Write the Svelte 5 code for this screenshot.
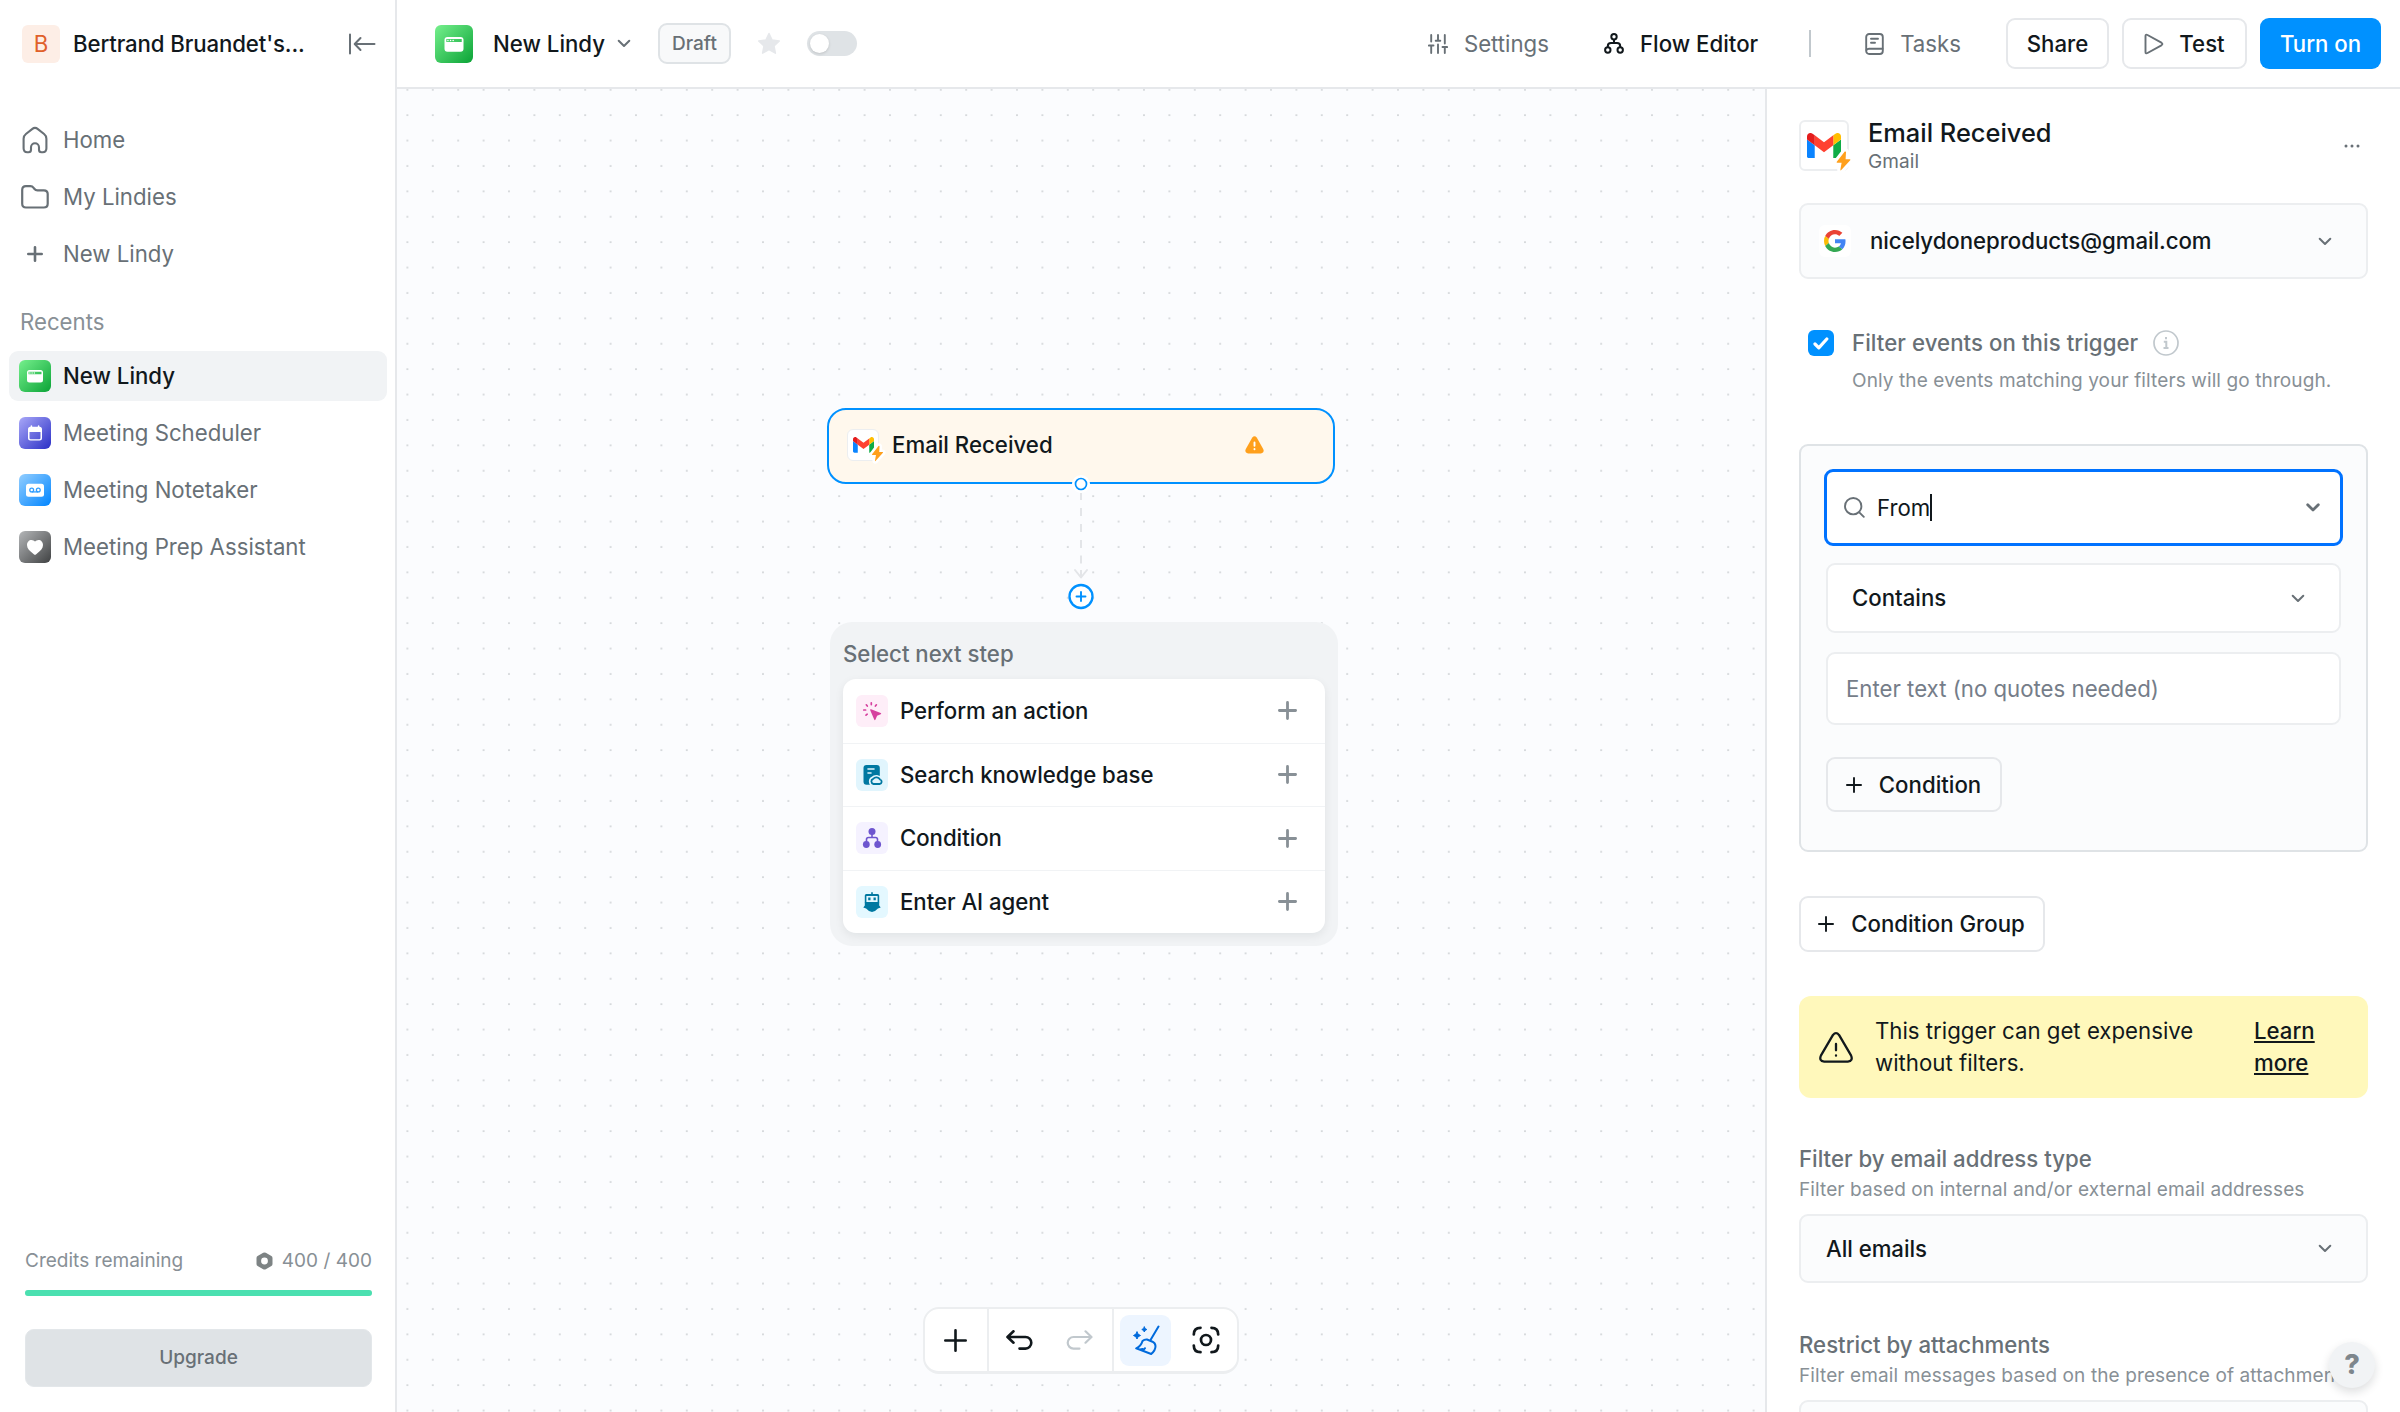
<script lang="ts">
  type Recent = { name: string; kind: string; active?: boolean };

  const recents: Recent[] = [
    { name: "New Lindy", kind: "window", active: true },
    { name: "Meeting Scheduler", kind: "calendar" },
    { name: "Meeting Notetaker", kind: "tape" },
    { name: "Meeting Prep Assistant", kind: "heart" },
  ];

  const steps = [
    { label: "Perform an action", kind: "action" },
    { label: "Search knowledge base", kind: "knowledge" },
    { label: "Condition", kind: "branch" },
    { label: "Enter AI agent", kind: "agent" },
  ];

  const creditsUsed = 400;
  const creditsTotal = 400;
</script>

{#snippet chevron(strong = false)}
  <svg class="chevron" width="14" height="9" viewBox="0 0 14 9" fill="none" stroke="currentColor" stroke-width={strong ? 2.8 : 2} stroke-linecap="round" stroke-linejoin="round">
    <path d="M1.7 1.7 7 7l5.3-5.3" />
  </svg>
{/snippet}

{#snippet plus(size: number, width: number)}
  <svg width={size} height={size} viewBox="0 0 {size} {size}" fill="none" stroke="currentColor" stroke-width={width} stroke-linecap="round">
    <path d="M{size / 2} {width / 2}V{size - width / 2}M{width / 2} {size / 2}H{size - width / 2}" />
  </svg>
{/snippet}

{#snippet gmail()}
  <svg class="gmail-mark" viewBox="52 42 88 66">
    <path fill="#0a84ff" d="M58 108h14V74L52 59v43c0 3.32 2.69 6 6 6" />
    <path fill="#0fac46" d="M120 108h14c3.32 0 6-2.69 6-6V59l-20 15" />
    <path fill="#ffbe00" d="M120 48v26l20-15v-8c0-7.42-8.47-11.65-14.4-7.2" />
    <path fill="#ff4131" d="M72 74V48l24 18 24-18v26L96 92" />
    <path fill="#e41c1c" d="M52 51v8l20 15V48l-5.6-4.2c-5.94-4.45-14.4-.22-14.4 7.2" />
  </svg>
  <svg class="bolt" viewBox="-3 -3 20 25">
    <path fill="#ffa01c" stroke="#fff" stroke-width="6" stroke-linejoin="round" paint-order="stroke" d="M8.2.4.6 10.2q-.6.9.5.9h4.1L4 17.8q0 1 .9.2L13.4 8.6q.6-.9-.5-.9H9L9.4.9q-.2-1-1.2-.5Z" />
  </svg>
{/snippet}

{#snippet appIcon(kind: string)}
  <svg viewBox="0 0 32 32" fill="#fff">
    {#if kind === "window"}
      <path fill-rule="evenodd" d="M10.5 10h11a2.5 2.5 0 0 1 2.5 2.5V20a2.5 2.5 0 0 1-2.5 2.5h-11A2.5 2.5 0 0 1 8 20v-7.5A2.5 2.5 0 0 1 10.5 10ZM9.5 11.8v2.5h13v-2.5Z" />
      <circle cx="10.9" cy="13" r=".65" /><circle cx="13.1" cy="13" r=".65" /><circle cx="15.3" cy="13" r=".65" />
    {:else if kind === "calendar"}
      <path fill-rule="evenodd" d="M11.5 9.8h9a2.5 2.5 0 0 1 2.5 2.5V21a2.5 2.5 0 0 1-2.5 2.5h-9A2.5 2.5 0 0 1 9 21v-8.700a2.5 2.5 0 0 1 2.5-2.5ZM10.5 15v6q0 1.2 1.2 1.2h8.6q1.2 0 1.2-1.2v-6Z" />
      <rect x="11.6" y="8.2" width="1.6" height="3" rx=".8" /><rect x="18.8" y="8.2" width="1.6" height="3" rx=".8" />
    {:else if kind === "tape"}
      <rect x="7" y="9.8" width="18" height="13" rx="2.5" />
      <g fill="none" stroke="#2f9dff" stroke-width="1.3"><circle cx="12.7" cy="16" r="1.9" /><circle cx="19.3" cy="16" r="1.9" /><path d="M12.7 17.9h6.6" /></g>
    {:else}
      <path d="M16 23.7q-.6 0-1.2-.5C10.5 20 8 17.5 8 14.1 8 11.2 10 9.1 12.5 9.1q2.2 0 3.5 1.5 1.300-1.500 3.500-1.500C22 9.1 24 11.2 24 14.1c0 3.4-2.5 5.9-6.8 9.100q-.6.5-1.2.5Z" />
    {/if}
  </svg>
{/snippet}

<div class="app">
  <aside class="sidebar">
    <div class="workspace">
      <span class="avatar">B</span>
      <span class="workspace-name">Bertrand Bruandet's...</span>
      <svg class="collapse" width="28" height="22" viewBox="0 0 28 22" fill="none" stroke="#687076" stroke-width="2" stroke-linecap="round" stroke-linejoin="round">
        <path d="M2 1.500v19M26.500 11H7.200M12.500 5 6.700 11l5.800 6" />
      </svg>
    </div>

    <nav>
      <div class="item">
        <span class="item-icon">
          <svg width="26" height="28" viewBox="0 0 26 28" fill="none" stroke="currentColor" stroke-width="2.1" stroke-linejoin="round">
            <path d="M1.600 12.800q0-3 2.300-4.800l6.200-4.900q2.900-2.300 5.800 0L22.100 8q2.300 1.800 2.300 4.800v9.400q0 4-3.700 4h-1.200q-2.500 0-2.500-2.500v-2.500a4 4 0 0 0-8 0v2.500q0 2.500-2.500 2.500H5.300q-3.700 0-3.700-4Z" />
          </svg>
        </span>
        Home
      </div>
      <div class="item">
        <span class="item-icon">
          <svg width="28" height="24" viewBox="0 0 28 24" fill="none" stroke="currentColor" stroke-width="2.2" stroke-linejoin="round">
            <path d="M1.200 18.700V4.900q0-3.700 3.700-3.700h4.500q2 0 3.200 1.600l.7.900q1.200 1.600 3.200 1.600h6.300q3.900 0 3.900 3.700v9.700q0 3.800-3.900 3.800H4.900q-3.700 0-3.700-3.800Z" />
          </svg>
        </span>
        My Lindies
      </div>
      <div class="item">
        <span class="item-icon">{@render plus(16, 2.6)}</span>
        New Lindy
      </div>
    </nav>

    <div class="section-title">Recents</div>

    <nav>
      {#each recents as r}
        <div class="item" class:active={r.active}>
          <span class="app-icon {r.kind}">{@render appIcon(r.kind)}</span>
          {r.name}
        </div>
      {/each}
    </nav>

    <div class="credits">
      <div class="credits-row">
        <span>Credits remaining</span>
        <span class="amount">
          <svg width="17" height="18" viewBox="0 0 17 18"><path fill="#7d8384" fill-rule="evenodd" d="M7.200.8q1.300-.7 2.600 0l5.600 3.200q1.100.6 1.100 1.900v6.200q0 1.300-1.100 1.900l-5.600 3.200q-1.300.7-2.600 0L1.600 14Q.5 13.400.5 12.100V5.900Q.5 4.600 1.600 4ZM8.500 5.600a3.400 3.400 0 1 0 0 6.800 3.400 3.400 0 0 0 0-6.800Z" /></svg>
          {creditsUsed} / {creditsTotal}
        </span>
      </div>
      <div class="meter"><div class="meter-fill" style="width: {(creditsUsed / creditsTotal) * 100}%"></div></div>
      <button class="upgrade">Upgrade</button>
    </div>
  </aside>

  <main>
    <header class="topbar">
      <span class="app-icon window big">{@render appIcon("window")}</span>
      <span class="title">New Lindy</span>
      {@render chevron()}
      <span class="badge">Draft</span>
      <svg class="star" width="24" height="23" viewBox="0 0 24 23"><path fill="#e6e8eb" stroke="#e6e8eb" stroke-width="1.5" stroke-linejoin="round" d="m12 1.500 3.100 6.600 7.200.9-5.300 5 1.400 7.200L12 17.700l-6.400 3.500L7 14 1.700 9l7.200-.9Z" /></svg>
      <span class="toggle"><span class="knob"></span></span>

      <div class="tabs">
        <span class="tab">
          <svg width="20" height="20" viewBox="0 0 20 20" fill="none" stroke="currentColor" stroke-width="1.9" stroke-linecap="round">
            <path d="M3.200 1v6.500M3.200 11.500V19M.9 11.500h4.600M10 1v5.500M10 10.500V19M7.700 6.800h4.600M16.800 1v8.500M16.800 13.200V19M14.500 13h4.600" />
          </svg>
          Settings
        </span>
        <span class="tab current">
          <svg width="20" height="21" viewBox="0 0 20 21" fill="none" stroke="currentColor" stroke-width="2">
            <circle cx="10" cy="3.8" r="2.7" /><circle cx="3.8" cy="17" r="2.7" /><circle cx="16.2" cy="17" r="2.7" />
            <path d="M10 6.500v3.500M3.800 14.300v-1.100q0-3.200 3.200-3.200h6q3.200 0 3.200 3.200v1.100" />
          </svg>
          Flow Editor
        </span>
        <span class="divider"></span>
        <span class="tab">
          <svg width="19" height="22" viewBox="0 0 19 22" fill="none" stroke="currentColor" stroke-width="1.9" stroke-linecap="round">
            <rect x="1.2" y="1" width="16.6" height="20" rx="3" /><path d="M1.500 17q.8-1.200 2.500-1.200h13.500M6 5.800h7M6 9.800h4" />
          </svg>
          Tasks
        </span>
      </div>
      <button class="btn share">Share</button>
      <button class="btn test">
        <svg width="20" height="22" viewBox="0 0 20 22" fill="none" stroke="#687076" stroke-width="1.9" stroke-linejoin="round"><path d="M1.500 3.100q0-2.200 2-1.100l13.900 7.700q2 1.300 0 2.600L3.500 20q-2 1.100-2-1.100Z" /></svg>
        Test
      </button>
      <button class="btn primary">Turn on</button>
    </header>

    <div class="body">
      <div class="canvas">
        <svg class="dots" width="100%" height="100%">
          <pattern id="grid" x="-2.3" y="-12" width="25.4" height="25.4" patternUnits="userSpaceOnUse">
            <circle cx="12.7" cy="12.7" r=".85" fill="#b9bdc1" />
          </pattern>
          <rect width="100%" height="100%" fill="url(#grid)" />
        </svg>

        <div class="node">
          <span class="service small">{@render gmail()}</span>
          <span class="node-title">Email Received</span>
          <svg width="19" height="18" viewBox="0 0 19 18"><path fill="#ffa01c" d="M7.300 1.600q2.200-2.800 4.400 0l6.500 11.500q1.600 3.900-2.200 4.300H3Q-.8 17 .8 13.100Z" /><path stroke="#fff" stroke-width="1.9" stroke-linecap="round" d="M9.500 6.500v3.300M9.500 13v.2" /></svg>
        </div>

        <!-- connector from the trigger down to the add button -->
        <svg class="edge" width="28" height="136" viewBox="0 0 28 136" fill="none">
          <path stroke="#e3e5e8" stroke-width="2" d="M14 19v7M14 34v8M14 50v8M14 66v8M14 81.500v8M14 96v8" />
          <path stroke="#e3e5e8" stroke-width="2" stroke-linecap="round" stroke-linejoin="round" d="m8 96 6 7.500 6-7.500" />
          <circle cx="14" cy="10" r="9" fill="#fff" />
          <circle cx="14" cy="10" r="5.5" fill="#fff" stroke="#0091ff" stroke-width="1.7" />
          <circle cx="14" cy="122.5" r="11.5" fill="#fff" stroke="#0091ff" stroke-width="2.3" />
          <path stroke="#0091ff" stroke-width="1.9" stroke-linecap="round" d="M14 118v9M9.500 122.500h9" />
        </svg>

        <div class="picker">
          <div class="picker-title">Select next step</div>
          <div class="picker-list">
            {#each steps as s}
              <div class="step">
                <span class="step-icon {s.kind}">
                  <svg viewBox="0 0 32 32" fill="currentColor">
                    {#if s.kind === "action"}
                      <path d="M14.200 15.200q-.4-1.300.9-.9l9.600 3.800q1.200.6 0 1.200l-3.600 1.500-1.600 3.800q-.7 1.200-1.300 0Z" />
                      <path fill="none" stroke="currentColor" stroke-width="1.7" stroke-linecap="round" d="M15.300 7.800v1.800M10.300 9.800l1 1.200M20.400 9.800l-1 1.200M7.800 15h1.800M10 20.200l1.200-1" />
                    {:else if s.kind === "knowledge"}
                      <rect x="7.5" y="6" width="16.3" height="19.8" rx="3" />
                      <path fill="none" stroke="#e1f5fd" stroke-width="1.6" stroke-linecap="round" d="M12 10h6M12 14h3" />
                      <path fill="#e1f5fd" stroke="#e1f5fd" stroke-width="5" d="M17.500 25a2.700 2.700 0 0 1-.3-5.200 4.300 4.300 0 0 1 6.800.7 2.300 2.300 0 0 1-.4 4.500Z" />
                      <path fill="none" stroke="currentColor" stroke-width="1.8" d="M17.500 25a2.700 2.700 0 0 1-.3-5.200 4.300 4.300 0 0 1 6.800.7 2.300 2.300 0 0 1-.4 4.500Z" />
                    {:else if s.kind === "branch"}
                      <circle cx="16" cy="9.5" r="3.5" /><circle cx="10.3" cy="22.5" r="3.4" /><circle cx="21.7" cy="22.5" r="3.4" />
                      <path fill="none" stroke="currentColor" stroke-width="1.6" d="M16 12v3.500M10.500 20v-2.500q0-2 2-2h7q2 0 2 2V20" />
                    {:else}
                      <path fill-rule="evenodd" d="M15.200 6.300h1.600v1.800h4.900q1.500 0 1.500 1.500V17H8.800V9.600q0-1.500 1.500-1.500h4.900ZM10.400 9.900v6h11.200v-6Z" />
                      <path d="M12.200 11.600h2.300v2.600h-2.300ZM17.500 11.600h2.300v2.600h-2.300ZM8.800 16.500h14.400v3l1.500 2-2.800 1.100Q19 26 16 26t-5.900-3.400l-2.800-1.100 1.500-2Z" />
                    {/if}
                  </svg>
                </span>
                <span class="step-label">{s.label}</span>
                {@render plus(19, 2.8)}
              </div>
            {/each}
          </div>
        </div>

        <div class="toolbar">
          <span class="tool add">{@render plus(23, 2.6)}</span>
          <span class="tool-group">
            <svg width="27" height="20" viewBox="0 0 27 20" fill="none" stroke="currentColor" stroke-width="2.6" stroke-linecap="round" stroke-linejoin="round"><path d="M7.500 1.300 1.500 7l6 5.700M2 7h17.500a5.600 5.600 0 0 1 0 11.600H13.500" /></svg>
            <svg class="faded" width="27" height="20" viewBox="0 0 27 20" fill="none" stroke="currentColor" stroke-width="2.2" stroke-linecap="round" stroke-linejoin="round"><path d="M19.500 1.300l6 5.700-6 5.700M25 7H7.500a5.600 5.600 0 0 0 0 11.600h6" /></svg>
          </span>
          <span class="tool-group last">
            <span class="tidy">
              <svg width="28" height="30" viewBox="0 0 28 30" fill="none" stroke="currentColor" stroke-width="2" stroke-linecap="round" stroke-linejoin="round">
                <path d="M26.500 1.500 18.800 14.500M10.500 16q2-1.800 4.500-1.500l5.500 2.200q2.800 1.400 3 4.300.1 4.200-4.300 8L4.200 23.300q4.800-2 6.300-7.300ZM11 25.500l2-2.300M8 24.500l2.500-.500" />
                <path fill="currentColor" stroke-width="1" d="M5 7q.5 2.800 3.500 3.500Q5.500 11.200 5 14q-.6-2.800-3.500-3.500Q4.400 9.800 5 7ZM12.300 2q.3 2 2.500 2.500-2.200.5-2.500 2.500-.3-2-2.500-2.500Q12 4 12.300 2Z" />
              </svg>
            </span>
            <svg width="28" height="28" viewBox="0 0 28 28" fill="none" stroke="currentColor" stroke-width="2.7" stroke-linecap="round">
              <circle cx="14" cy="14" r="5" /><path d="M1.800 8.500q0-6.700 6.700-6.700M19.500 1.800q6.700 0 6.700 6.700M26.200 19.500q0 6.700-6.700 6.700M8.500 26.200q-6.700 0-6.700-6.700" />
            </svg>
          </span>
        </div>
      </div>

      <section class="panel">
        <div class="panel-head">
          <span class="service large">{@render gmail()}</span>
          <div class="panel-names">
            <div class="panel-title">Email Received</div>
            <div class="hint">Gmail</div>
          </div>
          <svg class="more" width="16" height="4" viewBox="0 0 16 4" fill="#687076"><circle cx="2" cy="2" r="1.5" /><circle cx="8" cy="2" r="1.5" /><circle cx="14" cy="2" r="1.5" /></svg>
        </div>

        <div class="select account">
          <span class="google">
            <svg width="22" height="22" viewBox="0 0 48 48">
              <path fill="#EA4335" d="M24 9.500c3.540 0 6.710 1.220 9.210 3.600l6.850-6.850C35.900 2.380 30.470 0 24 0 14.620 0 6.510 5.380 2.560 13.220l7.980 6.190C12.430 13.720 17.740 9.500 24 9.500z" />
              <path fill="#4285F4" d="M46.980 24.550c0-1.570-.15-3.090-.38-4.550H24v9.020h12.940c-.58 2.960-2.260 5.480-4.780 7.180l7.730 6c4.510-4.180 7.090-10.360 7.090-17.650z" />
              <path fill="#FBBC05" d="M10.530 28.590c-.48-1.450-.76-2.990-.76-4.590s.27-3.140.76-4.590l-7.980-6.190C.92 16.460 0 20.120 0 24c0 3.880.92 7.540 2.560 10.780l7.970-6.190z" />
              <path fill="#34A853" d="M24 48c6.480 0 11.930-2.130 15.890-5.810l-7.730-6c-2.150 1.450-4.920 2.300-8.160 2.300-6.260 0-11.570-4.220-13.470-9.910l-7.980 6.190C6.510 42.620 14.620 48 24 48z" />
            </svg>
          </span>
          <span class="select-value">nicelydoneproducts@gmail.com</span>
          {@render chevron()}
        </div>

        <div class="check-row">
          <span class="checkbox">
            <svg width="16" height="13" viewBox="0 0 16 13" fill="none" stroke="#fff" stroke-width="3.2" stroke-linecap="round" stroke-linejoin="round"><path d="m2 7 3.800 3.800L13.800 2" /></svg>
          </span>
          <span class="check-label">Filter events on this trigger</span>
          <svg width="26" height="26" viewBox="0 0 26 26" fill="none" stroke="#c1c8cd" stroke-width="1.7"><circle cx="13" cy="13" r="12" /><path stroke-width="2" d="M13 7v2.300M10.800 11.700h2.500v6M10.500 18h5" /></svg>
        </div>
        <div class="hint indent">Only the events matching your filters will go through.</div>

        <div class="group">
          <div class="field focused">
            <svg width="21" height="21" viewBox="0 0 21 21" fill="none" stroke="#687076" stroke-width="1.9" stroke-linecap="round"><circle cx="9.2" cy="9.2" r="8.2" /><path d="m15.300 15.300 4.500 4.500" /></svg>
            <span class="query">From</span><span class="caret"></span>
            {@render chevron(true)}
          </div>
          <div class="field operator"><span>Contains</span>{@render chevron()}</div>
          <div class="field value">Enter text (no quotes needed)</div>
          <button class="btn add-condition">{@render plus(16, 1.9)}Condition</button>
        </div>

        <button class="btn add-group">{@render plus(16, 1.9)}Condition Group</button>

        <div class="notice">
          <svg width="34" height="31" viewBox="0 0 34 31" fill="none" stroke="#11181c" stroke-width="2.3" stroke-linecap="round" stroke-linejoin="round"><path d="M14 2.900q3-3.400 6 0l12 20.500q2.400 5.600-3.200 6.200H5.200Q-.4 29 2 23.400ZM17 12v6.300M17 23.500v.2" /></svg>
          <p>This trigger can get expensive without filters.</p>
          <span class="learn">Learn more</span>
        </div>

        <div class="label">Filter by email address type</div>
        <div class="hint">Filter based on internal and/or external email addresses</div>
        <div class="select plain"><span class="select-value">All emails</span>{@render chevron()}</div>

        <div class="label second">Restrict by attachments</div>
        <div class="hint">Filter email messages based on the presence of attachments</div>
        <div class="select plain"></div>
      </section>
    </div>
  </main>

  <button class="help">?</button>
</div>

<style>
  :global(body) {
    margin: 0;
  }

  .app,
  .app * {
    box-sizing: border-box;
  }

  .app {
    display: flex;
    position: relative;
    width: 2400px;
    height: 1412px;
    overflow: hidden;
    background: #fff;
    color: #11181c;
    font-family: Inter, "Liberation Sans", sans-serif;
    font-size: 22.22px;
    line-height: 32px;
    white-space: nowrap;
  }

  svg {
    display: block;
    flex: none;
  }

  button {
    font: inherit;
    color: inherit;
    padding: 0;
  }

  .chevron {
    color: #687076;
  }

  /* sidebar */
  .sidebar {
    display: flex;
    flex-direction: column;
    flex: none;
    width: 397px;
    padding: 25px 8px 25px 9px;
    border-right: 2px solid #e6e8eb;
  }

  .workspace {
    display: flex;
    align-items: center;
    height: 38px;
    padding: 0 11px 0 13px;
    margin-bottom: 52px;
    font-weight: 500;
  }

  .avatar {
    width: 38px;
    height: 38px;
    border-radius: 6px;
    background: #fdeee6;
    color: #e0602a;
    font-weight: 400;
    line-height: 38px;
    text-align: center;
  }

  .workspace-name {
    margin-left: 13px;
    letter-spacing: -0.12px;
  }

  .collapse {
    margin-left: auto;
  }

  nav {
    display: flex;
    flex-direction: column;
    gap: 7.1px;
  }

  .item {
    display: flex;
    align-items: center;
    gap: 12px;
    height: 50px;
    padding-left: 10px;
    border-radius: 9px;
    color: #687076;
  }

  .item.active {
    background: #f1f3f5;
    color: #11181c;
    font-weight: 500;
  }

  .item-icon {
    display: flex;
    justify-content: center;
    width: 32px;
  }

  .section-title {
    margin: 27px 0 13px 11px;
    color: #889096;
  }

  .app-icon {
    width: 32px;
    height: 32px;
    border-radius: 6px;
  }

  .app-icon.big {
    width: 38px;
    height: 38px;
  }

  .window {
    background: linear-gradient(135deg, #76f08d, #0aa336);
  }

  .calendar {
    background: linear-gradient(135deg, #a9a8f8, #2a2fc6);
  }

  .tape {
    background: linear-gradient(135deg, #93ceff, #0085ff);
  }

  .heart {
    background: linear-gradient(135deg, #b4b6b8, #3f4142);
  }

  .credits {
    margin-top: auto;
    padding: 0 15px 0 16px;
    color: #889096;
    font-size: 19.05px;
  }

  .credits-row,
  .amount {
    display: flex;
    align-items: center;
    justify-content: space-between;
    gap: 9px;
  }

  .meter {
    height: 6px;
    margin: 13px 0 33px;
    border-radius: 3px;
    background: #e6e8eb;
  }

  .meter-fill {
    height: 100%;
    border-radius: 3px;
    background: #4be0b0;
  }

  .upgrade {
    display: block;
    width: 100%;
    height: 58px;
    border: 1px solid #e3e7ea;
    border-radius: 9px;
    background: #dfe3e6;
    color: #687076;
    font-weight: 500;
  }

  /* top bar */
  main {
    display: flex;
    flex-direction: column;
    flex: 1;
    min-width: 0;
  }

  .topbar {
    display: flex;
    align-items: center;
    flex: none;
    height: 89px;
    padding: 0 19px 0 38px;
    border-bottom: 2px solid #e6e8eb;
    font-weight: 500;
  }

  .title {
    margin: 0 12px 0 20px;
  }

  .badge {
    height: 41px;
    margin: 0 26px 0 27px;
    padding: 0 12px;
    border: 2px solid #dfe3e6;
    border-radius: 9px;
    background: #f8f9fa;
    color: #687076;
    font-size: 19.05px;
    line-height: 38px;
  }

  .toggle {
    width: 50px;
    height: 25px;
    margin-left: 26px;
    padding: 3px;
    border-radius: 13px;
    background: #dfe3e6;
  }

  .knob {
    display: block;
    width: 19px;
    height: 19px;
    border-radius: 50%;
    background: #fff;
    box-shadow: 0 1px 3px rgba(0, 0, 0, 0.15);
  }

  .tabs {
    display: flex;
    align-items: center;
    margin-left: auto;
    margin-right: 45px;
  }

  .tab {
    display: flex;
    align-items: center;
    gap: 16px;
    color: #687076;
    font-weight: 400;
  }

  .tab.current {
    margin-left: 55px;
    color: #11181c;
    font-weight: 500;
  }

  .divider {
    width: 2px;
    height: 27px;
    margin: 0 54px 0 51px;
    background: #c1c8cd;
  }

  .btn {
    display: flex;
    align-items: center;
    justify-content: center;
    height: 51px;
    border: 2px solid #e6e8eb;
    border-radius: 9px;
    background: #fff;
    font-weight: 500;
  }

  .share {
    width: 103px;
  }

  .test {
    gap: 15px;
    width: 125px;
    margin: 0 13px;
  }

  .btn.primary {
    width: 121px;
    border: 0;
    background: #0091ff;
    color: #fff;
  }

  .body {
    display: flex;
    flex: 1;
    min-height: 0;
  }

  /* flow canvas */
  .canvas {
    position: relative;
    flex: 1;
    background: #fbfcfe;
  }

  .dots {
    position: absolute;
    inset: 0;
  }

  .node {
    position: absolute;
    left: 430px;
    top: 319px;
    display: flex;
    align-items: center;
    width: 508px;
    height: 76px;
    padding: 0 69px 2px 18px;
    border: 2px solid #0091ff;
    border-radius: 19px;
    background: #fff8ed;
    font-weight: 500;
  }

  .node-title {
    flex: 1;
    margin-left: 13px;
  }

  .service {
    position: relative;
    display: flex;
    align-items: center;
    justify-content: center;
    flex: none;
    border: 2px solid #eceef0;
    background: #fff;
  }

  .service.small {
    width: 32px;
    height: 32px;
    border-width: 1px;
    border-radius: 6px;
  }

  .service.large {
    width: 50px;
    height: 51px;
    border-radius: 6px;
  }

  .small :global(.gmail-mark) {
    width: 21px;
  }

  .large :global(.gmail-mark) {
    width: 34px;
  }

  .bolt {
    position: absolute;
    right: -8px;
    bottom: -4px;
    width: 17px;
    overflow: visible;
  }

  .large .bolt {
    right: -7px;
    bottom: -5px;
    width: 21px;
  }

  .edge {
    position: absolute;
    left: 670px;
    top: 385px;
  }

  .picker {
    position: absolute;
    left: 433px;
    top: 533px;
    width: 508px;
    height: 324px;
    padding: 16px 13px 0;
    border-radius: 22px;
    background: #f1f3f5;
  }

  .picker-title {
    margin-bottom: 9px;
    color: #687076;
    font-weight: 500;
  }

  .picker-list {
    border-radius: 13px;
    background: #fff;
    box-shadow: 0 3px 10px rgba(17, 24, 28, 0.07);
  }

  .step {
    display: flex;
    align-items: center;
    height: 63.5px;
    padding: 0 28px 0 13px;
    color: #889096;
  }

  .step + .step {
    border-top: 1.6px solid #f1f3f5;
  }

  .step-icon {
    width: 32px;
    height: 32px;
    border-radius: 6px;
  }

  .step-label {
    flex: 1;
    margin-left: 12px;
    color: #11181c;
    font-weight: 500;
    letter-spacing: -0.05px;
  }

  .action {
    background: #feeef8;
    color: #d6409f;
  }

  .knowledge {
    background: #e1f5fd;
    color: #0078a1;
  }

  .branch {
    background: #f5f2ff;
    color: #6e56cf;
  }

  .agent {
    background: #e4f8ff;
    color: #0078a1;
  }

  .toolbar {
    position: absolute;
    left: 526px;
    top: 1218px;
    display: flex;
    width: 316px;
    height: 67px;
    border: 2px solid #eceef0;
    border-bottom-width: 3px;
    border-radius: 16px;
    background: #fff;
  }

  .tool,
  .tool-group {
    display: flex;
    align-items: center;
    justify-content: center;
  }

  .add {
    width: 62px;
  }

  .tool-group {
    gap: 33px;
    width: 126px;
    border-left: 2px solid #eceef0;
    padding-right: 1px;
  }

  .tool-group.last {
    gap: 21px;
    padding-right: 10px;
  }

  .faded {
    color: #c1c8cd;
  }

  .tidy {
    display: flex;
    align-items: center;
    justify-content: center;
    width: 51px;
    height: 51px;
    border-radius: 9px;
    background: #edf5ff;
    color: #006adc;
  }

  /* settings panel */
  .panel {
    display: flex;
    flex-direction: column;
    flex: none;
    width: 635px;
    padding: 31px 32px 0;
    border-left: 2px solid #e6e8eb;
    background: #fff;
    overflow: hidden;
  }

  .panel > * {
    flex: none;
  }

  .panel-head {
    display: flex;
    align-items: center;
    height: 51px;
  }

  .panel-names {
    flex: 1;
    margin: 2px 0 0 19px;
  }

  .panel-title {
    height: 30px;
    font-size: 25.4px;
    font-weight: 500;
    line-height: 28px;
  }

  .hint {
    color: #889096;
    font-size: 19.05px;
    letter-spacing: 0.1px;
    line-height: 25px;
  }

  .panel-names .hint {
    color: #687076;
  }

  .more {
    margin-right: 8px;
  }

  .select {
    display: flex;
    align-items: center;
    border: 2px solid #eceef0;
    border-radius: 9px;
    background: #fbfcfd;
    font-weight: 500;
    padding-right: 34px;
  }

  .select-value {
    flex: 1;
    letter-spacing: -0.05px;
  }

  .account {
    height: 76px;
    margin-top: 32px;
    padding-left: 18px;
  }

  .google {
    display: flex;
    align-items: center;
    justify-content: center;
    width: 32px;
    height: 32px;
    margin-right: 19px;
    border-radius: 6px;
    background: #fff;
  }

  .check-row {
    display: flex;
    align-items: center;
    height: 26px;
    margin: 51px 0 12px 9px;
  }

  .checkbox {
    display: flex;
    align-items: center;
    justify-content: center;
    width: 26px;
    height: 26px;
    border-radius: 6px;
    background: #0091ff;
  }

  .check-label {
    margin: 0 15px 0 18px;
    color: #687076;
    font-weight: 500;
    letter-spacing: 0.06px;
  }

  .indent {
    margin-left: 53px;
  }

  .group {
    height: 408px;
    margin-top: 51px;
    padding: 23px 25px 0;
    border: 2px solid #dfe3e6;
    border-radius: 9px;
    background: #fbfcfd;
  }

  .field {
    display: flex;
    align-items: center;
    border: 2px solid #eceef0;
    border-radius: 9px;
    background: #fff;
  }

  .focused {
    height: 77px;
    margin: 0 -2px;
    padding: 0 20px 0 17px;
    border: 3px solid #0072ff;
  }

  .query {
    margin-left: 12px;
  }

  .caret {
    width: 2px;
    height: 27px;
    background: #11181c;
  }

  .focused .chevron,
  .operator .chevron {
    margin-left: auto;
  }

  .operator {
    height: 70px;
    margin-top: 17px;
    padding: 0 34px 0 24px;
    font-weight: 500;
  }

  .value {
    height: 73px;
    margin-top: 19px;
    padding-left: 18px;
    color: #757d89;
  }

  .add-condition,
  .add-group {
    gap: 17px;
    padding-right: 1px;
    background: transparent;
  }

  .add-condition {
    width: 176px;
    height: 55px;
    margin-top: 32px;
  }

  .add-group {
    width: 246px;
    height: 56px;
    margin-top: 44px;
  }

  .notice {
    display: flex;
    align-items: center;
    height: 102px;
    margin-top: 44px;
    padding: 0 20px;
    border-radius: 12px;
    background: #fff8bb;
  }

  .notice p {
    width: 330px;
    margin: 0 0 0 22px;
    white-space: normal;
  }

  .learn {
    width: 70px;
    margin-left: 49px;
    font-weight: 500;
    text-decoration: underline;
    white-space: normal;
  }

  .label {
    margin: 45px 0 2px;
    color: #687076;
    font-weight: 500;
  }

  .label.second {
    margin-top: 46px;
  }

  .plain {
    height: 69px;
    margin-top: 12px;
    padding-left: 25px;
  }

  .help {
    position: absolute;
    right: 25px;
    bottom: 24px;
    width: 46px;
    height: 46px;
    border: 0;
    border-radius: 50%;
    background: #f1f3f5;
    color: #7e868c;
    font-size: 27px;
    font-weight: 800;
    line-height: 46px;
    box-shadow: 0 4px 10px rgba(17, 24, 28, 0.14);
  }
</style>
